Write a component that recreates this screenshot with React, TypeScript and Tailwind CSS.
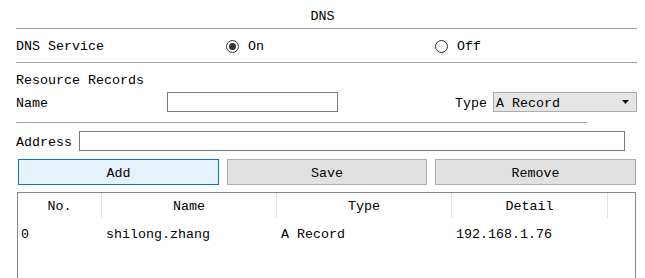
import React from "react"

const cols = [
  { label: "No.", w: "w-[84px]" },
  { label: "Name", w: "w-[175px]" },
  { label: "Type", w: "w-[175px]" },
  { label: "Detail", w: "w-[156px]" },
]

const rows = [{ no: "0", name: "shilong.zhang", type: "A Record", detail: "192.168.1.76" }]

function Radio({ checked, label }: { checked?: boolean; label: string }) {
  return (
    <div className="flex items-center">
      <span className="w-[13px] h-[13px] mt-[2px] rounded-full border border-[#333] bg-white flex items-center justify-center">
        {checked && <span className="w-[7px] h-[7px] rounded-full bg-[#333]" />}
      </span>
      <span className="ml-[9px] pt-[3px]">{label}</span>
    </div>
  )
}

export default function App() {
  return (
    <div className="w-[645px] h-[278px] bg-white overflow-hidden text-black text-[13.33px] leading-none font-['Liberation_Mono',monospace]">
      {/* titre */}
      <div className="h-[28px] pt-[6px] flex items-center justify-center">DNS</div>
      <div className="ml-[16px] w-[621px] h-px bg-[#a0a0a0]" />

      {/* service */}
      <div className="h-[33px] pl-[16px] flex items-center">
        <span className="w-[210px] pt-[3px]">DNS Service</span>
        <div className="w-[209px]">
          <Radio checked label="On" />
        </div>
        <Radio label="Off" />
      </div>
      <div className="ml-[16px] w-[621px] h-px bg-[#a0a0a0]" />

      {/* enregistrements */}
      <div className="h-[29px] pt-[6px] pl-[16px] flex items-center">Resource Records</div>
      <div className="h-[20px] pl-[16px] pr-[8px] flex items-center">
        <span className="w-[151px] pt-[3px]">Name</span>
        <div className="w-[171px] h-[20px] border border-[#7a7a7a] bg-white" />
        <div className="flex-1" />
        <span className="mr-[6px] pt-[3px]">Type</span>
        <div className="w-[144px] h-[20px] border border-[#acacac] bg-[#e5e5e5] flex items-center pl-[2px] pr-[7px]">
          <span className="flex-1 pt-[3px]">A Record</span>
          <svg width="7" height="4" viewBox="0 0 7 4">
            <path d="M0 0h7L3.5 4z" fill="#000" />
          </svg>
        </div>
      </div>
      <div className="mt-[10px] ml-[16px] w-[571px] h-px bg-[#a0a0a0]" />

      <div className="mt-[8px] h-[20px] pl-[16px] flex items-center">
        <span className="pt-[3px]">Address</span>
        <div className="ml-[7px] w-[546px] h-[20px] border border-[#7a7a7a] bg-white" />
      </div>

      {/* boutons */}
      <div className="mt-[8px] h-[26px] pl-[18px] flex gap-[8px]">
        <button className="w-[201px] h-[26px] pt-[3px] border border-[#0078d7] bg-[#e5f1fb]">Add</button>
        <button className="w-[200px] h-[26px] pt-[3px] border border-[#adadad] bg-[#e1e1e1]">Save</button>
        <button className="w-[201px] h-[26px] pt-[3px] border border-[#adadad] bg-[#e1e1e1]">Remove</button>
      </div>

      {/* liste */}
      <div className="mt-[7px] ml-[17px] w-[619px] h-[120px] border border-b-0 border-[#828790] bg-white">
        <div className="h-[25px] flex">
          {cols.map((c) => (
            <div key={c.label} className={`${c.w} h-full pt-[2px] flex items-center justify-center border-r border-[#e5e5e5]`}>
              {c.label}
            </div>
          ))}
        </div>
        {rows.map((r) => (
          <div key={r.no} className="mt-[9px] h-[16px] flex items-center">
            <span className="w-[84px] pl-[3px]">{r.no}</span>
            <span className="w-[175px] pl-[4px]">{r.name}</span>
            <span className="w-[175px] pl-[4px]">{r.type}</span>
            <span className="w-[156px] pl-[4px]">{r.detail}</span>
          </div>
        ))}
      </div>
    </div>
  )
}
